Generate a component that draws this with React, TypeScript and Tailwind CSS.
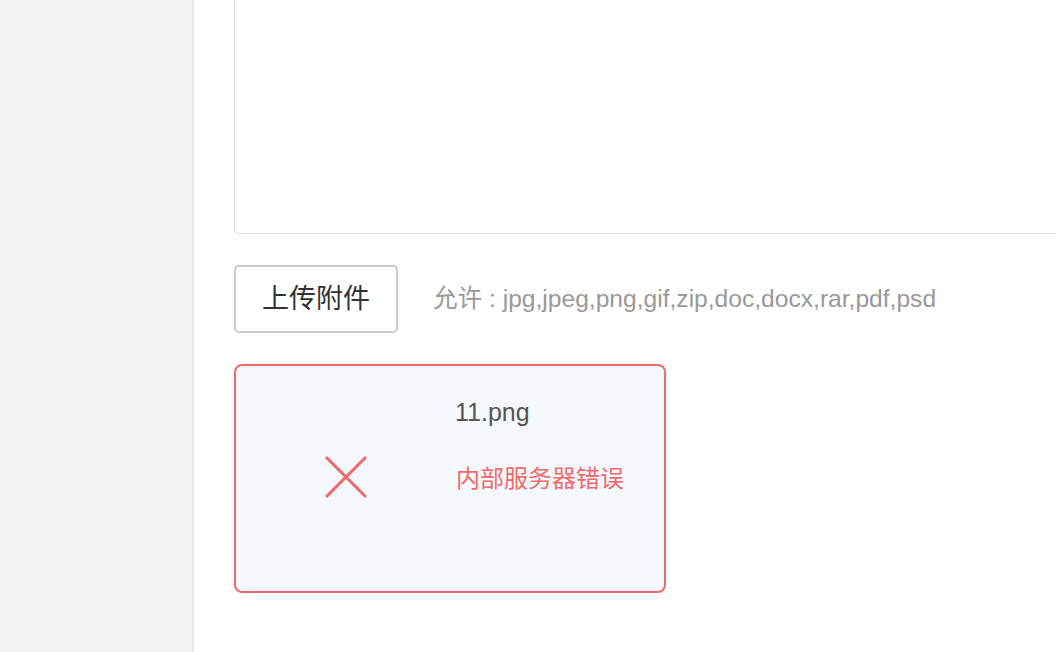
import { X } from "lucide-react";

const fontStack = '"Liberation Sans", "Noto Sans CJK SC", sans-serif';

export default function App() {
  return (
    <div
      className="flex w-[1056px] h-[652px] overflow-hidden bg-white"
      style={{ fontFamily: fontStack }}
    >
      {/* sidebar */}
      <div className="w-[194px] shrink-0 bg-[#f2f2f2] border-r-2 border-[#e6e6e6]" />

      {/* main */}
      <div className="flex-1 overflow-hidden pl-[40px]">
        <div className="w-[900px] h-[234px] border-x border-b border-[#dcdcdc] rounded-b-[5px]" />

        <div className="flex items-center mt-[31px]">
          <button
            type="button"
            className="w-[164px] h-[68px] border-2 border-[#cccccc] rounded-[5px] text-[27px] text-[#333] bg-white"
          >
            上传附件
          </button>
          <span className="ml-[35px] text-[24.6px] text-[#999]">
            允许 : jpg,jpeg,png,gif,zip,doc,docx,rar,pdf,psd
          </span>
        </div>

        <div className="relative mt-[31px] w-[432px] h-[229px] border-2 border-[#ec6b6b] rounded-[8px] bg-[#f5f8fc] flex items-center">
          <div className="w-[220px] flex justify-center -mt-[4px]">
            <X className="w-[76px] h-[76px] text-[#ec6b6b]" strokeWidth={1} />
          </div>
          <div className="absolute left-[219px] top-[28px] text-[25px] text-[#555]">
            11.png
          </div>
          <div className="text-[24px] text-[#f06a6a]">内部服务器错误</div>
        </div>
      </div>
    </div>
  );
}
